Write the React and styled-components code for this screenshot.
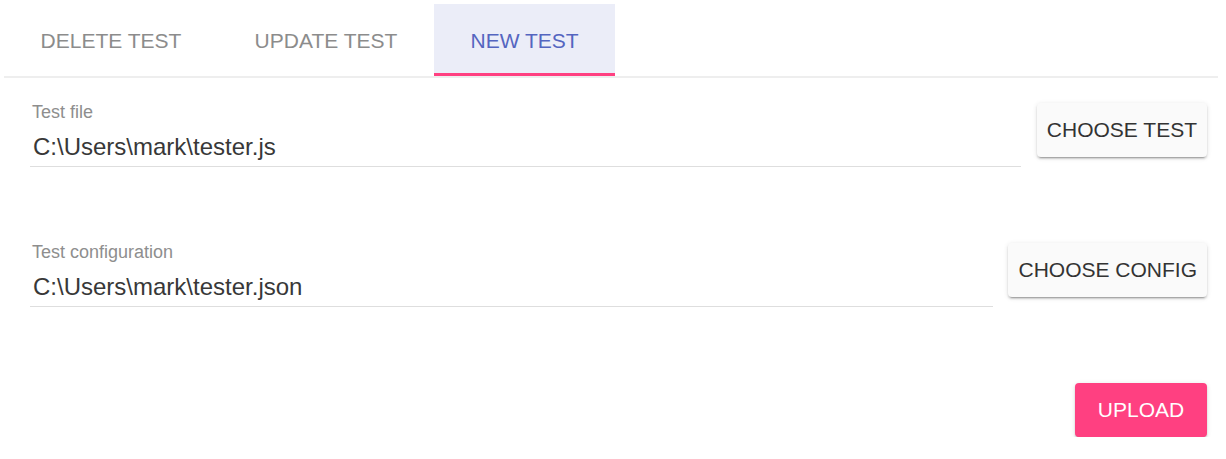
import React, { useState } from 'react'
import styled, { createGlobalStyle } from 'styled-components'

const GlobalStyle = createGlobalStyle`
  body {
    margin: 0;
    background: #fff;
    font-family: "Liberation Sans", Arial, sans-serif;
  }
`

const TabBar = styled.div`
  display: flex;
  margin: 4px 8px 0 4px;
  border-bottom: 2px solid #eeeeee;
`

const Tab = styled.button`
  height: 72px;
  padding: 5px 36.6px 0;
  border: none;
  border-bottom: 3px solid ${p => (p.$active ? '#ff4081' : 'transparent')};
  background: ${p => (p.$active ? '#ebedf8' : 'transparent')};
  color: ${p => (p.$active ? '#5465c0' : '#8c8c8c')};
  font-family: inherit;
  font-size: 21px;
  text-transform: uppercase;
  cursor: pointer;
`

const Content = styled.div`
  display: flex;
  flex-direction: column;
  gap: 76px;
  padding: 25px 19px 0 30px;
`

const Row = styled.div`
  display: flex;
  align-items: flex-start;
  gap: ${p => p.$gap || 16}px;
  justify-content: ${p => (p.$end ? 'flex-end' : 'flex-start')};
`

const Field = styled.div`
  flex: 1;
  display: flex;
  flex-direction: column;
`

const Label = styled.label`
  font-size: 18px;
  line-height: 18px;
  color: #8e8e8e;
  padding-left: 2px;
`

const Value = styled.div`
  margin-top: 11px;
  font-size: 24px;
  line-height: 30px;
  color: #383838;
  padding: 0 0 4px 3px;
  border-bottom: 1px solid #dedede;
`

const Button = styled.button`
  height: 54px;
  min-width: ${p => p.$minWidth || 0}px;
  padding: 0 10px;
  border: none;
  border-radius: 4px;
  background: ${p => (p.$primary ? '#ff4081' : '#fafafa')};
  color: ${p => (p.$primary ? '#fff' : '#333')};
  font-family: inherit;
  font-size: 21px;
  text-transform: uppercase;
  box-shadow: 0 3px 1px -2px rgba(0, 0, 0, 0.2), 0 2px 2px 0 rgba(0, 0, 0, 0.14),
    0 1px 5px 0 rgba(0, 0, 0, 0.12);
  cursor: pointer;
`

const tabs = ['Delete test', 'Update test', 'New test']

export default function App() {
  const [active, setActive] = useState(2)

  return (
    <>
      <GlobalStyle />
      <TabBar>
        {tabs.map((t, i) => (
          <Tab key={t} $active={i === active} onClick={() => setActive(i)}>
            {t}
          </Tab>
        ))}
      </TabBar>
      <Content>
        <Row>
          <Field>
            <Label>Test file</Label>
            <Value>C:\Users\mark\tester.js</Value>
          </Field>
          <Button>Choose test</Button>
        </Row>
        <Row $gap={15}>
          <Field>
            <Label>Test configuration</Label>
            <Value>C:\Users\mark\tester.json</Value>
          </Field>
          <Button>Choose config</Button>
        </Row>
        <Row $end>
          <Button $primary $minWidth={132}>Upload</Button>
        </Row>
      </Content>
    </>
  )
}
